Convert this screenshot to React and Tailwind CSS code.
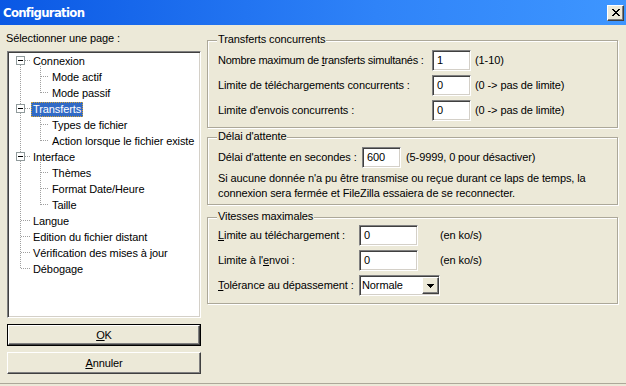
import React from 'react'

const sunken =
  'border border-t-[#808080] border-l-[#808080] border-r-white border-b-white shadow-[inset_1px_1px_0_#404040,inset_-1px_-1px_0_#D4D0C8]'
const raised =
  'border border-t-white border-l-white border-r-[#404040] border-b-[#404040] shadow-[inset_-1px_-1px_0_#808080]'

const tree = [
  { label: 'Connexion', level: 0, open: true },
  { label: 'Mode actif', level: 1 },
  { label: 'Mode passif', level: 1 },
  { label: 'Transferts', level: 0, open: true, selected: true },
  { label: 'Types de fichier', level: 1 },
  { label: 'Action lorsque le fichier existe', level: 1 },
  { label: 'Interface', level: 0, open: true },
  { label: 'Thèmes', level: 1 },
  { label: 'Format Date/Heure', level: 1 },
  { label: 'Taille', level: 1 },
  { label: 'Langue', level: 0 },
  { label: 'Edition du fichier distant', level: 0 },
  { label: 'Vérification des mises à jour', level: 0 },
  { label: 'Débogage', level: 0 },
]

function TreeLines() {
  const cy = (i) => 8 + i * 16 + 0.5
  const last = tree.length - 1
  const lines = []
  // main trunk
  lines.push(<line key="trunk" x1="12.5" y1="13" x2="12.5" y2={cy(last)} />)
  tree.forEach((row, i) => {
    if (row.level === 0) {
      lines.push(
        <line key={'h' + i} x1={row.open ? 17 : 13} y1={cy(i)} x2="22" y2={cy(i)} />
      )
      if (row.open) {
        let j = i + 1
        while (j < tree.length && tree[j].level === 1) j++
        lines.push(<line key={'v' + i} x1="32.5" y1={cy(i) + 5} x2="32.5" y2={cy(j - 1)} />)
      }
    } else {
      lines.push(<line key={'c' + i} x1="33" y1={cy(i)} x2="41" y2={cy(i)} />)
    }
  })
  return (
    <svg
      className="absolute left-0 top-0 pointer-events-none"
      width="60"
      height="230"
      shapeRendering="crispEdges"
    >
      <g stroke="#A0A0A0" strokeWidth="1" strokeDasharray="1 1">
        {lines}
      </g>
      {tree.map((row, i) =>
        row.open ? (
          <g key={'b' + i}>
            <rect x="8.5" y={cy(i) - 4} width="8" height="8" fill="#fff" stroke="#919B9C" />
            <line x1="10" y1={cy(i)} x2="15" y2={cy(i)} stroke="#000" />
          </g>
        ) : null
      )}
    </svg>
  )
}

function Tree() {
  return (
    <div className={`relative h-[267px] bg-white ${sunken}`}>
      <div className="relative pt-[1px] pl-[1px]">
        <TreeLines />
        {tree.map((row) => (
          <div
            key={row.label}
            className={`flex h-[16px] items-center ${row.level === 0 ? 'pl-[22px]' : 'pl-[41px]'}`}
          >
            <span
              className={`px-[2px] h-[15px] leading-[15px] whitespace-nowrap ${
                row.selected
                  ? 'bg-[#316AC5] text-white outline outline-1 outline-dotted outline-[#CFA33B] -outline-offset-1'
                  : 'text-black'
              }`}
            >
              {row.label}
            </span>
          </div>
        ))}
      </div>
    </div>
  )
}

function Group({ title, className, children }) {
  return (
    <div
      className={`relative border border-[#ACA899] shadow-[inset_1px_1px_0_#fff,1px_1px_0_#fff] ${className}`}
    >
      <span className="absolute -top-[8px] left-[9px] bg-[#ECE9D8] px-[1px] leading-[13px]">
        {title}
      </span>
      {children}
    </div>
  )
}

function Input({ value, className }) {
  return (
    <div className={`h-[21px] shrink-0 bg-white ${sunken} pl-[4px] leading-[19px] ${className}`}>
      {value}
    </div>
  )
}

function Button({ children, primary }) {
  return (
    <div className={`h-[22px] ${primary ? 'border border-black' : ''}`}>
      <div className={`h-full flex items-center justify-center bg-[#ECE9D8] ${raised}`}>
        {children}
      </div>
    </div>
  )
}

export default function App() {
  return (
    <div className="w-[626px] h-[386px] bg-[#ECE9D8] text-[11px] tracking-[-0.1px] text-black font-['Liberation_Sans',Arial,sans-serif] overflow-hidden flex flex-col">
      {/* title bar */}
      <div className="h-[25px] shrink-0 flex items-center justify-between bg-[linear-gradient(to_right,#0A58E4,#2F83F8_60%,#3E96FF)] pl-[3px] pr-[2px]">
        <span className="text-white font-bold text-[13px] tracking-[-0.7px] font-['Liberation_Sans_Narrow','DejaVu_Sans_Condensed','Liberation_Sans',sans-serif]">
          Configuration
        </span>
        <div className={`w-[17px] h-[16px] flex items-center justify-center bg-[#ECE9D8] ${raised}`}>
          <svg width="8" height="7" viewBox="0 0 8 7" shapeRendering="crispEdges">
            <path
              d="M0 0h2v1h1v1h2V1h1V0h2v1H7v1H6v1H5v1h1v1h1v1h1v1H6V6H5V5H3v1H2v1H0V6h1V5h1V4h1V3H2V2H1V1H0z"
              fill="#000"
            />
          </svg>
        </div>
      </div>

      {/* body */}
      <div className="flex flex-1 border-b border-[#ACA899] mb-[2px]">
        {/* left column */}
        <div className="w-[201px] pl-[7px] flex flex-col">
          <div className="pt-[7px] -ml-[1px] leading-[13px]">Sélectionner une page :</div>
          <div className="mt-[6px]">
            <Tree />
          </div>
          <div className="mt-[6px]">
            <Button primary>
              <span>
                <u>O</u>K
              </span>
            </Button>
          </div>
          <div className="mt-[6px]">
            <Button>
              <span>
                <u>A</u>nnuler
              </span>
            </Button>
          </div>
        </div>

        {/* right column */}
        <div className="ml-[6px] w-[411px] pt-[15px] flex flex-col">
          <Group title="Transferts concurrents" className="h-[88px] pt-[9px] pl-[10px]">
            <div className="flex flex-col gap-[4px]">
              <div className="flex items-center h-[21px]">
                <span className="w-[214px] shrink-0 whitespace-nowrap tracking-[-0.25px]">
                  Nombre maximum de <u>t</u>ransferts simultanés :
                </span>
                <Input value="1" className="w-[39px]" />
                <span className="ml-[4px]">(1-10)</span>
              </div>
              <div className="flex items-center h-[21px]">
                <span className="w-[214px] shrink-0 whitespace-nowrap">
                  Limite de téléchargements concurrents :
                </span>
                <Input value="0" className="w-[39px]" />
                <span className="ml-[4px]">(0 -&gt; pas de limite)</span>
              </div>
              <div className="flex items-center h-[21px]">
                <span className="w-[214px] shrink-0 whitespace-nowrap">Limite d'envois concurrents :</span>
                <Input value="0" className="w-[39px]" />
                <span className="ml-[4px]">(0 -&gt; pas de limite)</span>
              </div>
            </div>
          </Group>

          <Group title="Délai d'attente" className="mt-[9px] h-[68px] pt-[9px] pl-[10px]">
            <div className="flex items-center h-[21px]">
              <span className="w-[144px] shrink-0 whitespace-nowrap">Délai d'attente en secondes :</span>
              <Input value="600" className="w-[39px]" />
              <span className="ml-[5px]">(5-9999, 0 pour désactiver)</span>
            </div>
            <p className="mt-[3px] leading-[15px]">
              Si aucune donnée n'a pu être transmise ou reçue durant ce laps de temps, la
              <br />
              connexion sera fermée et FileZilla essaiera de se reconnecter.
            </p>
          </Group>

          <Group title="Vitesses maximales" className="mt-[12px] h-[87px] pt-[7px] pl-[10px]">
            <div className="flex flex-col gap-[5px]">
              <div className="flex items-center h-[20px]">
                <span className="w-[141px] shrink-0 whitespace-nowrap">
                  <u>L</u>imite au téléchargement :
                </span>
                <Input value="0" className="w-[59px] h-[20px]" />
                <span className="ml-[22px]">(en ko/s)</span>
              </div>
              <div className="flex items-center h-[20px]">
                <span className="w-[141px] shrink-0 whitespace-nowrap">
                  Limite à l'<u>e</u>nvoi :
                </span>
                <Input value="0" className="w-[59px] h-[20px]" />
                <span className="ml-[22px]">(en ko/s)</span>
              </div>
              <div className="flex items-center h-[21px]">
                <span className="w-[141px] shrink-0 whitespace-nowrap">
                  <u>T</u>olérance au dépassement :
                </span>
                <div className={`w-[81px] h-[21px] bg-white ${sunken} flex items-center`}>
                  <span className="flex-1 pl-[2px]">Normale</span>
                  <div
                    className={`w-[17px] h-[17px] flex items-center justify-center bg-[#ECE9D8] ${raised}`}
                  >
                    <svg width="7" height="4" viewBox="0 0 7 4" shapeRendering="crispEdges">
                      <path d="M0 0h7v1H6v1H5v1H4v1H3V3H2V2H1V1H0z" fill="#000" />
                    </svg>
                  </div>
                </div>
              </div>
            </div>
          </Group>
        </div>
      </div>
    </div>
  )
}
